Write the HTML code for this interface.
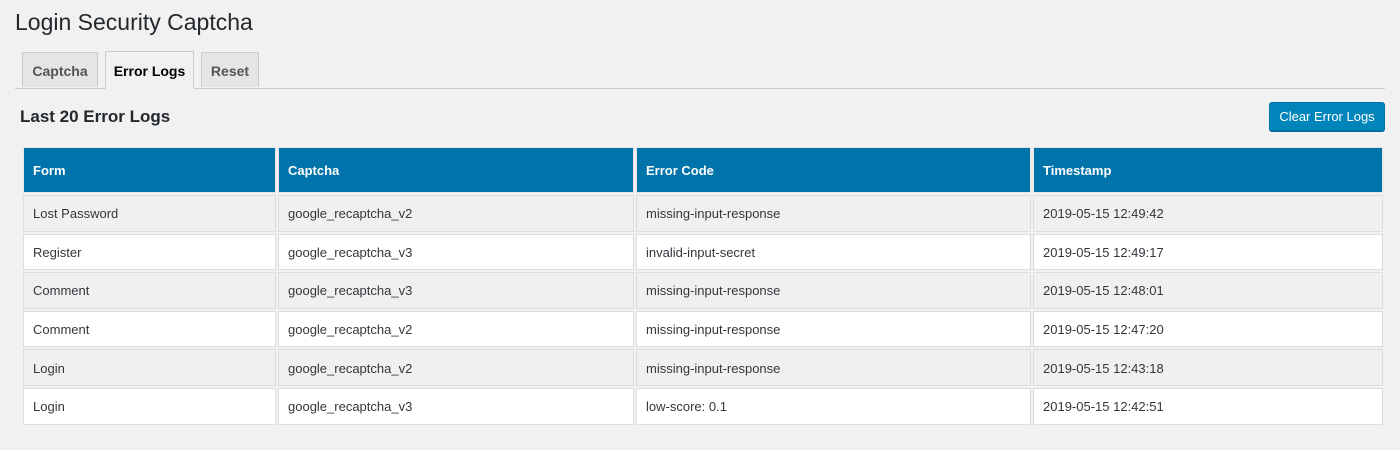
<!DOCTYPE html>
<html><head><style>
body{margin:0;background:#f1f1f1;font-family:"Liberation Sans",sans-serif;color:#23282d;width:1400px;height:450px;overflow:hidden;position:relative}
h1{position:absolute;left:15px;top:9px;margin:0;font-size:23px;font-weight:400;color:#23282d}
.tab{position:absolute;top:52px;height:35px;border:1px solid #ccc;border-bottom:none;background:#e5e5e5;color:#555;font-size:14px;font-weight:600;line-height:37px;text-align:center;box-sizing:border-box}
.tab.a{background:#f1f1f1;color:#000;top:51px;height:38px;line-height:39px}
.line{position:absolute;left:15px;top:88px;width:1370px;height:1px;background:#ccc}
h2{position:absolute;left:20px;top:107px;margin:0;font-size:17px;font-weight:600}
.btn{position:absolute;left:1269px;top:102px;width:116px;height:29px;box-sizing:border-box;background:#0085ba;border:1px solid #0073aa;border-radius:3px;color:#fff;font-size:13px;line-height:28px;text-align:center;box-shadow:0 1px 0 #006799}
table{position:absolute;left:21px;top:145px;border-collapse:separate;border-spacing:2px;font-size:13px}
td,th{border:1px solid #ddd;box-sizing:border-box;padding:0 0 0 9px;text-align:left;color:#32373c}
th{background:#0073aa;color:#fff;font-weight:700;height:46px;border-color:#e5e5e5}
td{height:36.6px;background:#f0f0f0;padding-top:1px}
tr.w td{background:#fff}
</style></head><body>
<h1>Login Security Captcha</h1>
<div class="tab" style="left:22px;width:76px">Captcha</div>
<div class="tab" style="left:201px;width:58px">Reset</div>
<div class="line"></div>
<div class="tab a" style="left:105px;width:89px;border-bottom:1px solid #f1f1f1">Error Logs</div>
<h2>Last 20 Error Logs</h2>
<div class="btn">Clear Error Logs</div>
<table>
<tr><th style="width:253px">Form</th><th style="width:356px">Captcha</th><th style="width:395px">Error Code</th><th style="width:350px">Timestamp</th></tr>
<tr><td>Lost Password</td><td>google_recaptcha_v2</td><td>missing-input-response</td><td>2019-05-15 12:49:42</td></tr>
<tr class="w"><td>Register</td><td>google_recaptcha_v3</td><td>invalid-input-secret</td><td>2019-05-15 12:49:17</td></tr>
<tr><td>Comment</td><td>google_recaptcha_v3</td><td>missing-input-response</td><td>2019-05-15 12:48:01</td></tr>
<tr class="w"><td>Comment</td><td>google_recaptcha_v2</td><td>missing-input-response</td><td>2019-05-15 12:47:20</td></tr>
<tr><td>Login</td><td>google_recaptcha_v2</td><td>missing-input-response</td><td>2019-05-15 12:43:18</td></tr>
<tr class="w"><td>Login</td><td>google_recaptcha_v3</td><td>low-score: 0.1</td><td>2019-05-15 12:42:51</td></tr>
</table>
</body></html>
